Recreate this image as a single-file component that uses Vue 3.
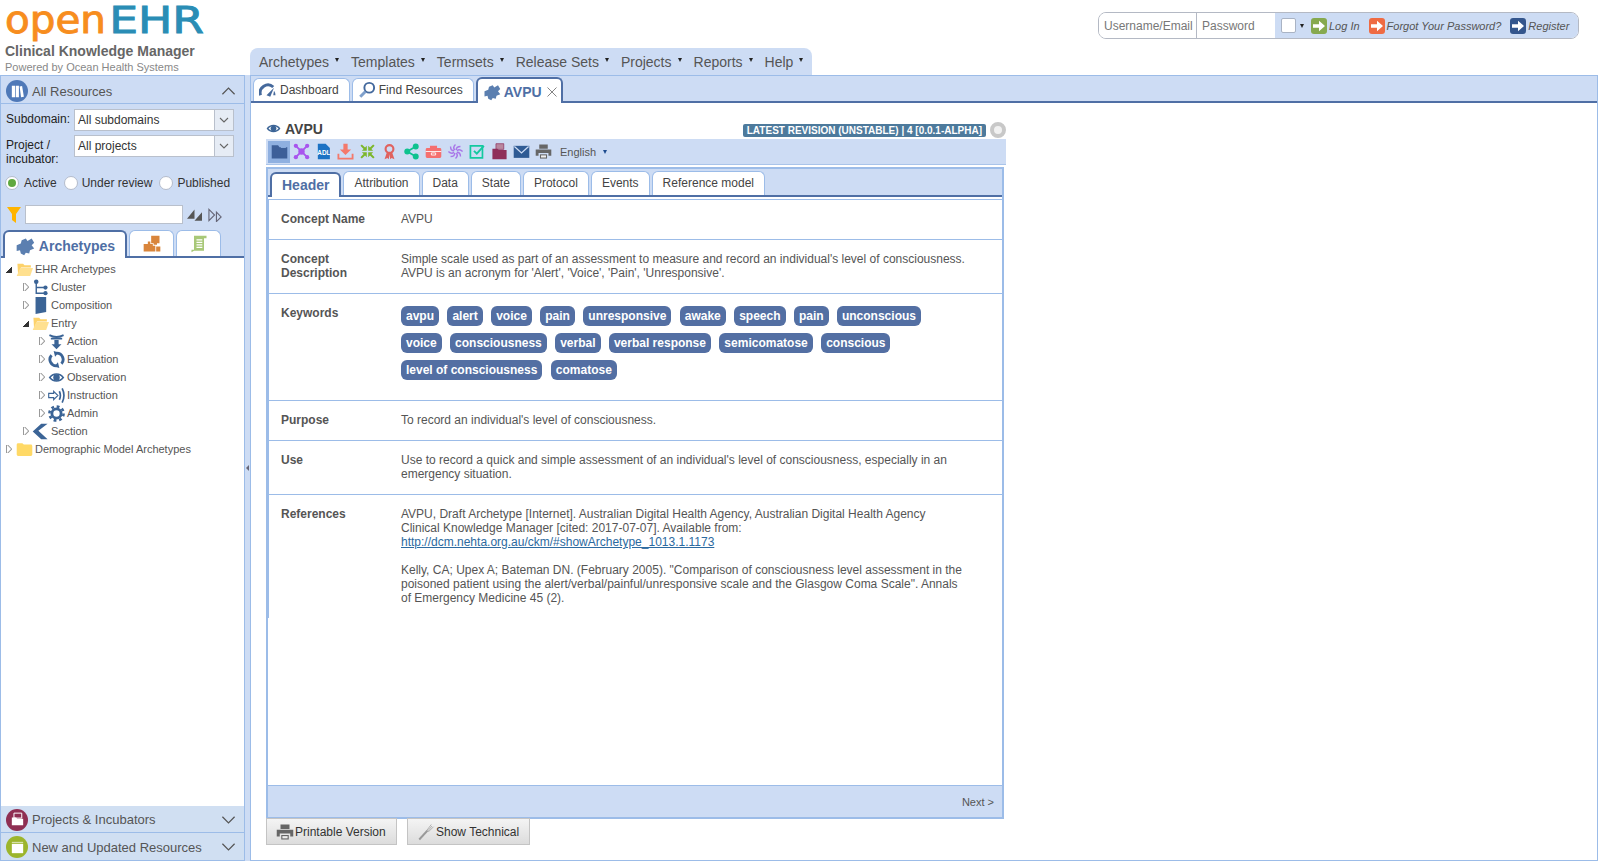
<template>
  <div class="page">
    <header class="topbar">
      <div class="brand">
        <div class="logo"><span class="logo-open">open</span><span class="logo-ehr">EHR</span></div>
        <div class="brand-title">Clinical Knowledge Manager</div>
        <div class="brand-sub">Powered by Ocean Health Systems</div>
      </div>
      <nav class="menu">
        <span v-for="item in menu" :key="item" class="menu-item">{{ item }}<i class="caret"></i></span>
      </nav>
      <div class="login">
        <span class="login-field user">Username/Email</span>
        <span class="login-field pass">Password</span>
        <div class="login-actions">
          <span class="check"></span><i class="caret small"></i>
          <span class="go green"><svg viewBox="0 0 24 24" v-html="icons.arrow"></svg></span><em class="log">Log In</em>
          <span class="go orange"><svg viewBox="0 0 24 24" v-html="icons.arrow"></svg></span><em class="forgot">Forgot Your Password?</em>
          <span class="go navy"><svg viewBox="0 0 24 24" v-html="icons.arrow"></svg></span><em>Register</em>
        </div>
      </div>
    </header>

    <div class="body">
      <aside class="side">
        <div class="acc-head first">
          <span class="acc-icon blue"><svg viewBox="0 0 24 24" v-html="icons.books"></svg></span>
          <span class="acc-title">All Resources</span>
          <svg class="chev" viewBox="0 0 16 10"><path d="M1.5 8.5 8 2l6.5 6.5" /></svg>
        </div>
        <div class="filters">
          <div class="filter-row">
            <label>Subdomain:</label>
            <div class="select"><span>All subdomains</span><b><svg viewBox="0 0 12 8"><path d="M2 2l4 4 4-4" /></svg></b></div>
          </div>
          <div class="filter-row two">
            <label>Project / incubator:</label>
            <div class="select"><span>All projects</span><b><svg viewBox="0 0 12 8"><path d="M2 2l4 4 4-4" /></svg></b></div>
          </div>
          <div class="radios">
            <span class="radio on"></span><span class="r-text first">Active</span>
            <span class="radio"></span><span class="r-text">Under review</span>
            <span class="radio"></span><span class="r-text">Published</span>
          </div>
          <div class="search">
            <svg class="funnel" viewBox="0 0 14 16"><path d="M0 0h14L9 7v9l-4-3V7z" /></svg>
            <span class="search-input"></span>
            <svg class="tri" viewBox="0 0 16 14"><path d="M0 11 8 1v10zM8 13h8V4z" fill="#555" /></svg>
            <svg class="tri second" viewBox="0 0 16 14"><path d="M1 1l6 6-6 6zM9 4l5 5-5 5z" fill="none" stroke="#667" stroke-width="1.2" /></svg>
          </div>
        </div>
        <div class="side-tabs">
          <span class="side-tab active"><svg viewBox="0 0 24 24" v-html="icons.puzzle"></svg>Archetypes</span>
          <span class="side-tab icon-only"><svg viewBox="0 0 24 24" v-html="icons.blocks"></svg></span>
          <span class="side-tab icon-only"><svg viewBox="0 0 24 24" v-html="icons.scroll"></svg></span>
        </div>
        <div class="tree">
          <div v-for="node in tree" :key="node.label" class="tree-row" :class="'lvl' + node.level">
            <i class="arrow" :class="{ open: node.open }"></i>
            <svg class="tree-icon" viewBox="0 0 24 24" v-html="icons[node.icon]"></svg>
            <span>{{ node.label }}</span>
          </div>
        </div>
        <div class="acc-head bottom">
          <span class="acc-icon maroon"><svg viewBox="0 0 24 24" v-html="icons.project"></svg></span>
          <span class="acc-title">Projects &amp; Incubators</span>
          <svg class="chev" viewBox="0 0 16 10"><path d="M1.5 1.5 8 8l6.5-6.5" /></svg>
        </div>
        <div class="acc-head bottom last">
          <span class="acc-icon lime"><svg viewBox="0 0 24 24" v-html="icons.calendar"></svg></span>
          <span class="acc-title">New and Updated Resources</span>
          <svg class="chev" viewBox="0 0 16 10"><path d="M1.5 1.5 8 8l6.5-6.5" /></svg>
        </div>
      </aside>

      <div class="splitter"><i></i></div>

      <main class="main">
        <div class="main-tabs">
          <span class="main-tab"><svg viewBox="0 0 24 24" v-html="icons.gauge"></svg>Dashboard</span>
          <span class="main-tab"><svg viewBox="0 0 24 24" v-html="icons.search"></svg>Find Resources</span>
          <span class="main-tab active"><svg viewBox="0 0 24 24" v-html="icons.puzzle"></svg>AVPU<svg class="close" viewBox="0 0 10 10"><path d="M0.5 0.5l9 9M9.5 0.5l-9 9" /></svg></span>
        </div>
        <div class="doc">
          <div class="doc-title">
            <svg viewBox="0 0 24 24" v-html="icons.eye"></svg>
            <h2>AVPU</h2>
            <span class="badge">LATEST REVISION (UNSTABLE) | 4 [0.0.1-ALPHA]</span>
            <span class="ring"></span>
          </div>
          <div class="toolbar">
            <span v-for="(tool, i) in tools" :key="i" class="tool" :class="{ active: i === 0 }">
              <svg viewBox="0 0 24 24" v-html="tool"></svg>
            </span>
            <span class="lang">English<i class="caret navy-caret"></i></span>
          </div>
          <section class="panel">
            <div class="panel-tabs">
              <span v-for="(t, i) in panelTabs" :key="t" class="panel-tab" :class="{ active: i === 0 }">{{ t }}</span>
            </div>
            <div class="panel-body">
              <div class="rows">
                <div class="row">
                  <div class="key">Concept Name</div>
                  <div class="val">AVPU</div>
                </div>
                <div class="row">
                  <div class="key">Concept Description</div>
                  <div class="val">Simple scale used as part of an assessment to measure and record an individual's level of consciousness. AVPU is an acronym for 'Alert', 'Voice', 'Pain', 'Unresponsive'.</div>
                </div>
                <div class="row keywords">
                  <div class="key">Keywords</div>
                  <div class="chips">
                    <span v-for="(k, i) in keywords" :key="i" class="chip">{{ k }}</span>
                  </div>
                </div>
                <div class="row">
                  <div class="key">Purpose</div>
                  <div class="val">To record an individual's level of consciousness.</div>
                </div>
                <div class="row">
                  <div class="key">Use</div>
                  <div class="val">Use to record a quick and simple assessment of an individual's level of consciousness, especially in an emergency situation.</div>
                </div>
                <div class="row last">
                  <div class="key">References</div>
                  <div class="val">
                    AVPU, Draft Archetype [Internet]. Australian Digital Health Agency, Australian Digital Health Agency Clinical Knowledge Manager [cited: 2017-07-07]. Available from:<br />
                    <a href="#">http://dcm.nehta.org.au/ckm/#showArchetype_1013.1.1173</a><br /><br />
                    Kelly, CA; Upex A; Bateman DN. (February 2005). "Comparison of consciousness level assessment in the poisoned patient using the alert/verbal/painful/unresponsive scale and the Glasgow Coma Scale". Annals of Emergency Medicine 45 (2).
                  </div>
                </div>
              </div>
            </div>
            <div class="panel-foot">Next &gt;</div>
          </section>
          <div class="actions">
            <button class="btn print"><svg viewBox="0 0 24 24" v-html="icons.printer"></svg>Printable Version</button>
            <button class="btn tech"><svg viewBox="0 0 24 24" v-html="icons.wrench"></svg>Show Technical</button>
          </div>
        </div>
      </main>
    </div>
  </div>
</template>

<script setup>
const menu = ['Archetypes', 'Templates', 'Termsets', 'Release Sets', 'Projects', 'Reports', 'Help']
const panelTabs = ['Header', 'Attribution', 'Data', 'State', 'Protocol', 'Events', 'Reference model']
const keywords = [
  'avpu', 'alert', 'voice', 'pain', 'unresponsive', 'awake', 'speech', 'pain', 'unconscious',
  'voice', 'consciousness', 'verbal', 'verbal response', 'semicomatose', 'conscious',
  'level of consciousness', 'comatose'
]

const NAVY = '#3b6496'
const corner = 'M11 11H4l2.5-2.500L2 4l2-2 4.500 4.500L11 4z'
const icons = {
  arrow: '<path d="M3 9.500h9V4l9 8-9 8v-5.500H3z" fill="#fff"/>',
  books: '<path d="M4 4h4.500v16H4zM9.500 4H14v16H9.500zM15 5l3.500-.8L21 19.500l-4 .5z" fill="#fff"/>',
  puzzle: '<path d="M2 11l5-2 1-4 5-2 2 3 5-3 3 5-3 3 3 4-5 2-1 4-4-1-2 3-4-2-1-4-4 1z" fill="#5b7fb0"/>',
  blocks: '<path d="M11 2h10v9h-3v2h-4v-2h-3zM2 12h5V9h3v3h3v2h3v7H2zM17 15h5v6h-5z" fill="#d9853b"/>',
  scroll: '<path d="M6 2h15v3h-3v15H6l-3 2v-3h3z" fill="#a8c878"/><path d="M9 7h7M9 10h7M9 13h7M9 16h7" stroke="#fff" stroke-width="1.400"/>',
  folderOpen: '<path d="M2 4h8l2 2h9v3H7L3 20z" fill="#fdd26a"/><path d="M6 10h18l-4 11H1z" fill="#ffe08f"/>',
  folder: '<path d="M1 5a2 2 0 0 1 2-2h6l2 2h10a2 2 0 0 1 2 2v12a2 2 0 0 1-2 2H3a2 2 0 0 1-2-2z" fill="#ffd966"/>',
  cluster: '<circle cx="6" cy="4" r="3.200" fill="' + NAVY + '"/><circle cx="19" cy="12" r="3" fill="' + NAVY + '"/><circle cx="19" cy="20" r="3" fill="' + NAVY + '"/><path d="M6 4v16h13M6 12h13" fill="none" stroke="' + NAVY + '" stroke-width="2"/>',
  composition: '<path d="M5 0h15v21l-15 3z" fill="' + NAVY + '"/>',
  action: '<path d="M2 3c6 3 14 3 20 0M4 8h16" fill="none" stroke="' + NAVY + '" stroke-width="2.400"/><path d="M9 10h6v6h4l-7 7-7-7h4z" fill="' + NAVY + '"/>',
  evaluation: '<path d="M12 3a9 9 0 0 1 7 15M12 21a9 9 0 0 1-7-15" fill="none" stroke="' + NAVY + '" stroke-width="4"/><path d="M8 0l7 2-5 6zM16 24l-7-2 5-6z" fill="' + NAVY + '"/>',
  eye: '<path d="M1 12c5-8 17-8 22 0-5 8-17 8-22 0z" fill="' + NAVY + '"/><path d="M4 12c4-5 12-5 16 0-4 5-12 5-16 0z" fill="#fff"/><circle cx="12" cy="12" r="4.600" fill="' + NAVY + '"/>',
  instruction: '<path d="M1 9h7V6l6 6-6 6v-3H1z" fill="none" stroke="' + NAVY + '" stroke-width="1.600"/><path d="M16 6c2 4 2 8 0 12M20 2c3 6 3 14 0 20" fill="none" stroke="' + NAVY + '" stroke-width="2.400"/>',
  gear: '<circle cx="12" cy="12" r="6.500" fill="none" stroke="' + NAVY + '" stroke-width="4"/><circle cx="12" cy="12" r="10" fill="none" stroke="' + NAVY + '" stroke-width="3.600" stroke-dasharray="4 3.850"/>',
  section: '<path d="M22 1L9 11l13 12H13L1 12 13 1z" fill="' + NAVY + '"/>',
  project: '<path d="M7 3h11v7H7z" fill="none" stroke="#fff" stroke-width="1.400"/><path d="M4 9h6l1.500 2H20v9H4z" fill="#fff"/>',
  calendar: '<path d="M4 7h16v13H4z" fill="#fff"/><path d="M4 4h16v2H4z" fill="#fff" opacity=".6"/>',
  gauge: '<path d="M2 19A10.500 10.500 0 0 1 19 8" fill="none" stroke="#45699c" stroke-width="4"/><path d="M10 19l10-10-5 12z" fill="#45699c"/><path d="M20 13a10 10 0 0 1 2 6h-3z" fill="#45699c"/>',
  search: '<circle cx="15" cy="9" r="6.500" fill="#fff" stroke="#44699d" stroke-width="2.600"/><path d="M10 14l-7 7" stroke="#7fa0cc" stroke-width="4"/>',
  printer: '<path d="M6 2h12v6H6zM1 9h22v9h-4v-4H5v4H1z" fill="#666"/><path d="M7 16h10v6H7z" fill="#666"/><path d="M8.500 17.500h7v3h-7z" fill="#eee"/>',
  wrench: '<path d="M3 22l11-12" stroke="#999" stroke-width="2.600"/><path d="M13 10l6-8M15 12l7-7M14 11l6-7" stroke="#aaa" stroke-width="1.200"/>'
}

const tools = [
  '<path d="M1 3h9l2 3h11v16H1z" fill="#3d5f98"/><path d="M14 5h7v2h-7z" fill="#8fb0e0"/>',
  '<path d="M4 4l16 16M20 4L4 20" stroke="#a855ee" stroke-width="2.600"/><circle cx="12" cy="12" r="4.500" fill="#a855ee"/><circle cx="4" cy="4" r="3" fill="#a855ee"/><circle cx="20" cy="4" r="3" fill="#a855ee"/><circle cx="4" cy="20" r="3" fill="#a855ee"/><circle cx="20" cy="20" r="3" fill="#a855ee"/>',
  '<path d="M4 1h11l6 6v16H4z" fill="#1c72c4"/><text x="12.500" y="17" font-size="9" font-weight="700" font-family="Liberation Sans, sans-serif" text-anchor="middle" fill="#fff">ADL</text>',
  '<path d="M9 1h6v8h5l-8 8-8-8h5z" fill="#f4796b"/><path d="M2 15v7h20v-7" fill="none" stroke="#f4796b" stroke-width="2.600"/>',
  [0, 90, 180, 270].map((a) => '<path d="' + corner + '" fill="#7cb62a" transform="rotate(' + a + ' 12 12)"/>').join(''),
  '<circle cx="12" cy="8.500" r="5.500" fill="none" stroke="#e0625f" stroke-width="3"/><path d="M8 14l-3 9 4-2 2 2 1-7 1 7 2-2 4 2-3-9z" fill="#e0625f"/>',
  '<path d="M18 5L6 12l12 7" fill="none" stroke="#0ec28f" stroke-width="2.400"/><circle cx="18" cy="5" r="4.200" fill="#0ec28f"/><circle cx="6" cy="12" r="4.200" fill="#0ec28f"/><circle cx="18" cy="19" r="4.200" fill="#0ec28f"/>',
  '<path d="M7 7V4h10v3h4a2 2 0 0 1 2 2v10a2 2 0 0 1-2 2H3a2 2 0 0 1-2-2V9a2 2 0 0 1 2-2z" fill="#f56f6f"/><path d="M1 12h22M9 14h6v3H9z" stroke="#fff" stroke-width="1.200" fill="none"/>',
  '<path d="M12 2c-3 3-3 6-1 8M22 12c-3-3-6-3-8-1M12 22c3-3 3-6 1-8M2 12c3 3 6 3 8 1M5 5c0 4 2 6 5 6M19 5c-4 0-6 2-6 5M19 19c0-4-2-6-5-6M5 19c4 0 6-2 6-5" fill="none" stroke="#a877e8" stroke-width="2"/>',
  '<path d="M2 4h17v17H2z" fill="none" stroke="#14c9a0" stroke-width="2.400"/><path d="M7 11l4 4 10-11" fill="none" stroke="#14c9a0" stroke-width="2.600"/>',
  '<path d="M7 1h11v8H7z" fill="#b9889f" stroke="#8f2f5a"/><path d="M2 8h7l2 2h11v13H2z" fill="#8f2f5a"/>',
  '<path d="M1 4h22v17H1z" fill="#2f5b94"/><path d="M2 5l10 9 10-9" fill="none" stroke="#cddcf4" stroke-width="1.800"/>',
  icons.printer
]

const tree = [
  { label: 'EHR Archetypes', level: 0, open: true, icon: 'folderOpen' },
  { label: 'Cluster', level: 1, icon: 'cluster' },
  { label: 'Composition', level: 1, icon: 'composition' },
  { label: 'Entry', level: 1, open: true, icon: 'folderOpen' },
  { label: 'Action', level: 2, icon: 'action' },
  { label: 'Evaluation', level: 2, icon: 'evaluation' },
  { label: 'Observation', level: 2, icon: 'eye' },
  { label: 'Instruction', level: 2, icon: 'instruction' },
  { label: 'Admin', level: 2, icon: 'gear' },
  { label: 'Section', level: 1, icon: 'section' },
  { label: 'Demographic Model Archetypes', level: 0, icon: 'folder' }
]
</script>

<style>
html, body { margin: 0; padding: 0; background: #fff; }
</style>

<style scoped>
.page {
  width: 1600px;
  height: 861px;
  display: flex;
  flex-direction: column;
  overflow: hidden;
  font-family: "Liberation Sans", Arial, sans-serif;
  font-size: 12px;
  color: #555;
  box-sizing: border-box;
}

/* top */
.topbar { height: 75px; display: flex; flex: none; }
.brand { width: 250px; flex: none; padding-left: 5px; box-sizing: border-box; }
.logo {
  height: 40px;
  font-family: "DejaVu Sans", sans-serif;
  font-size: 37px;
  line-height: 42px;
  transform: scaleX(1.17);
  transform-origin: left top;
  -webkit-text-stroke: 0.9px;
  white-space: nowrap;
}
.logo-open { display: inline-block; color: #f78d1e; transform: scaleX(0.935); transform-origin: left top; margin-right: -3.400px; }
.logo-ehr { display: inline-block; color: #2a8db5; transform: scaleX(1.055); transform-origin: left top; }
.brand-title { font-size: 14px; font-weight: 700; color: #666; line-height: 18px; margin-top: 2px; }
.brand-sub { font-size: 11px; color: #888; line-height: 13px; margin-top: 1px; }

.menu {
  align-self: flex-end;
  height: 27px;
  width: 562px;
  box-sizing: border-box;
  background: #cddcf4;
  border-radius: 8px 8px 0 0;
  display: flex;
  align-items: center;
  padding-left: 9px;
  gap: 12px;
  font-size: 14px;
  color: #555;
}
.menu-item { display: inline-flex; align-items: center; white-space: nowrap; }
.caret {
  display: inline-block;
  width: 0;
  height: 0;
  border-left: 2.500px solid transparent;
  border-right: 2.500px solid transparent;
  border-top: 4px solid #222;
  margin-left: 6px;
  margin-bottom: 4px;
}
.caret.small { margin: 0 0 0 4px; }
.navy-caret { border-top-color: #1d4b8f; margin-bottom: 0; margin-left: 7px; }

.login {
  margin-left: auto;
  margin-right: 21px;
  margin-top: 12px;
  height: 27px;
  width: 481px;
  box-sizing: border-box;
  display: flex;
  border: 1px solid #b4b9c4;
  border-radius: 8px;
  overflow: hidden;
}
.login-field { line-height: 27px; color: #777; padding-left: 5px; box-sizing: border-box; background: #fff; }
.login-field.user { width: 98px; border-right: 1px solid #b4b9c4; }
.login-field.pass { width: 78px; }
.login-actions {
  flex: 1;
  background: #cddcf4;
  display: flex;
  align-items: center;
  padding-left: 6px;
  font-size: 11px;
  color: #555;
}
.login-actions em { white-space: nowrap; }
.check { width: 13px; height: 13px; background: #fff; border: 1px solid #a9b3c4; border-radius: 2px; }
.go { width: 16px; height: 16px; border-radius: 3px; margin-left: 7px; margin-right: 2px; display: flex; flex: none; }
.go svg { width: 16px; height: 16px; }
.go.green { background: #86a94f; }
.go.orange { background: #ef6b43; margin-left: 9px; }
.go.navy { background: #34568d; margin-left: 9px; }

/* layout */
.body { flex: 1; display: flex; min-height: 0; }

/* side */
.side {
  width: 245px;
  flex: none;
  box-sizing: border-box;
  border: 1px solid #9cbce8;
  display: flex;
  flex-direction: column;
  background: #fff;
}
.acc-head {
  height: 27px;
  flex: none;
  box-sizing: border-box;
  display: flex;
  align-items: center;
  background: #d0dff2;
  padding-left: 5px;
  padding-top: 1px;
  font-size: 13px;
  color: #555;
}
.acc-head.first { height: 28px; padding-top: 3px; border-bottom: 1px solid #9cbce8; background: #cddcf4; }
.acc-head.bottom { border-bottom: 1px solid #9cbce8; }
.acc-head.last { border-bottom: 0; }
.acc-icon { width: 22px; height: 22px; border-radius: 50%; display: flex; align-items: center; justify-content: center; margin-right: 4px; flex: none; }
.acc-icon svg { width: 17px; height: 17px; }
.acc-icon.blue { background: #4f79b8; }
.acc-icon.maroon { background: #8f2f52; }
.acc-icon.lime { background: #9cb52c; }
.acc-title { flex: 1; }
.chev { width: 15px; height: 10px; margin-right: 8px; fill: none; stroke: #555; stroke-width: 1.300; }

.filters { background: #cddcf4; padding: 5px 5px 0; height: 126px; box-sizing: border-box; flex: none; }
.filter-row { display: flex; height: 22px; margin-bottom: 4px; color: #222; }
.filter-row label { width: 68px; flex: none; line-height: 14px; padding-top: 3px; }
.select {
  width: 160px;
  height: 22px;
  box-sizing: border-box;
  background: #fff;
  border: 1px solid #b9c0cc;
  display: flex;
  line-height: 20px;
  padding-left: 3px;
  color: #333;
}
.select span { flex: 1; }
.select b { width: 18px; background: #e6ecf5; border-left: 1px solid #b9c0cc; display: flex; align-items: center; justify-content: center; }
.select svg { width: 12px; height: 8px; fill: none; stroke: #666; stroke-width: 1.100; }
.radios { display: flex; align-items: center; height: 14px; margin-top: 19px; margin-left: -1px; color: #333; }
.radio { width: 12px; height: 12px; border-radius: 50%; background: #fff; border: 1px solid #b4bccb; flex: none; position: relative; }
.radio.on::after { content: ""; position: absolute; left: 2px; top: 2px; width: 8px; height: 8px; border-radius: 50%; background: #5fa83f; }
.r-text { margin: 0 7px 0 4px; white-space: nowrap; }
.r-text.first { margin-left: 5px; }
.search { display: flex; align-items: center; margin-top: 15px; }
.funnel { width: 14px; height: 16px; fill: #ffb400; margin: 0 4px 0 1px; flex: none; }
.search-input { width: 158px; height: 19px; box-sizing: border-box; background: #fff; border: 1px solid #b9c0cc; }
.tri { width: 15px; height: 14px; margin-left: 4px; }
.tri.second { margin-left: 6px; }

.side-tabs {
  display: flex;
  height: 26px;
  flex: none;
  background: #cddcf4;
  padding-left: 2px;
  gap: 2px;
  border-bottom: 2px solid #4f6fa5;
}
.side-tab {
  height: 26px;
  box-sizing: border-box;
  background: #fff;
  border: 1px solid #9cbce8;
  border-bottom: 0;
  border-radius: 6px 6px 0 0;
  display: flex;
  align-items: center;
  justify-content: center;
}
.side-tab svg { width: 20px; height: 20px; }
.side-tab.icon-only { width: 45px; }
.side-tab.active {
  width: 124px;
  height: 28px;
  border: 2px solid #4f6fa5;
  border-bottom: 0;
  color: #4f6fa5;
  font-weight: 700;
  font-size: 14px;
  padding-top: 2px;
  position: relative;
  z-index: 1;
}
.side-tab.active svg { margin-right: 4px; }

.tree { flex: 1; padding-top: 2px; font-size: 11px; color: #555; }
.tree-row { height: 18px; display: flex; align-items: center; white-space: nowrap; }
.tree-row.lvl0 { padding-left: 5px; }
.tree-row.lvl0 .tree-icon { margin-left: 4px; }
.tree-row.lvl1 { padding-left: 22px; }
.tree-row.lvl2 { padding-left: 38px; }
.tree-icon { width: 17px; height: 17px; margin: 0 2px 0 3px; flex: none; }
.arrow {
  width: 6px;
  height: 8px;
  flex: none;
  box-sizing: border-box;
  border-left: 1px solid #999;
  position: relative;
  overflow: hidden;
}
.arrow::after {
  content: "";
  position: absolute;
  left: -4px;
  top: 0;
  width: 5.600px;
  height: 5.600px;
  border: 1px solid #999;
  transform: rotate(45deg);
  transform-origin: center;
}
.arrow.open { border: 0; width: 6px; height: 7px; background: linear-gradient(135deg, transparent 50%, #333 50%); overflow: visible; }
.arrow.open::after { display: none; }

.splitter { width: 5px; flex: none; background: #cddcf4; display: flex; align-items: center; justify-content: center; }
.splitter i { width: 0; height: 0; border-top: 3px solid transparent; border-bottom: 3px solid transparent; border-right: 3px solid #667; }

/* main */
.main {
  flex: 1;
  margin-right: 2px;
  box-sizing: border-box;
  border: 1px solid #9cbce8;
  display: flex;
  flex-direction: column;
  min-width: 0;
  background: #fff;
}
.main-tabs {
  height: 27px;
  flex: none;
  box-sizing: border-box;
  background: #cddcf4;
  border-bottom: 2px solid #4f6fa5;
  display: flex;
  align-items: flex-end;
  padding-left: 2px;
  gap: 2px;
}
.main-tab {
  height: 23px;
  box-sizing: border-box;
  background: #fff;
  border: 1px solid #9cbce8;
  border-bottom: 0;
  border-radius: 6px 6px 0 0;
  display: flex;
  align-items: center;
  padding: 0 10px 0 5px;
  color: #444;
  white-space: nowrap;
}
.main-tab svg { width: 18px; height: 18px; margin-right: 3px; }
.main-tab.active {
  height: 26px;
  margin-bottom: -2px;
  border: 2px solid #4f6fa5;
  border-bottom: 0;
  font-size: 14px;
  font-weight: 700;
  color: #4f6fa5;
  padding: 1px 4px 0 5px;
}
.main-tab .close { width: 10px; height: 10px; margin: 0 0 0 5px; fill: none; stroke: #777; stroke-width: 0.900; }

.doc { flex: 1; padding-left: 15px; width: 755px; box-sizing: border-box; min-height: 0; display: flex; flex-direction: column; }
.doc-title { height: 36px; flex: none; display: flex; align-items: flex-end; padding-bottom: 2px; box-sizing: border-box; position: relative; }
.doc-title > svg { width: 15px; height: 15px; margin-left: 0; margin-right: 4px; margin-bottom: 1px; }
.doc-title h2 { margin: 0; font-size: 14px; line-height: 16px; color: #444; font-weight: 700; }
.badge {
  margin-left: auto;
  margin-right: 20px;
  background: #4d7a9c;
  color: #fff;
  font-size: 10px;
  font-weight: 700;
  line-height: 13px;
  height: 13px;
  padding: 0 4px;
  border-radius: 2px;
  white-space: nowrap;
}
.ring { position: absolute; right: 0; bottom: 1px; width: 8px; height: 8px; border: 4px solid #c8c8c8; border-radius: 50%; background: #f1f1f1; }

.toolbar {
  height: 26px;
  flex: none;
  background: #cddcf4;
  border-bottom: 1px solid #a9c4ea;
  box-sizing: border-box;
  display: flex;
  align-items: center;
  padding-left: 2px;
  width: 740px;
}
.tool { width: 22px; height: 22px; display: flex; align-items: center; justify-content: center; flex: none; }
.tool svg { width: 17px; height: 17px; }
.tool.active { background: #8fb0e0; }
.lang { font-size: 11px; color: #555; margin-left: 6px; display: flex; align-items: center; }

.panel {
  margin-top: 2px;
  width: 738px;
  height: 652px;
  flex: none;
  box-sizing: border-box;
  border: 2px solid #9cbce8;
  display: flex;
  flex-direction: column;
}
.panel-tabs {
  height: 28px;
  flex: none;
  box-sizing: border-box;
  background: #cddcf4;
  border-bottom: 2px solid #4f6fa5;
  display: flex;
  align-items: flex-end;
  padding-left: 2px;
  gap: 2px;
}
.panel-tab {
  height: 24px;
  box-sizing: border-box;
  background: #fff;
  border: 1px solid #9cbce8;
  border-bottom: 0;
  border-radius: 6px 6px 0 0;
  padding: 0 10px;
  line-height: 22px;
  color: #444;
  white-space: nowrap;
}
.panel-tab.active {
  height: 25px;
  margin-bottom: -2px;
  border: 2px solid #4f6fa5;
  border-bottom: 0;
  font-size: 14px;
  font-weight: 700;
  color: #4f6fa5;
  line-height: 23px;
}
.panel-body { flex: 1; min-height: 0; padding-top: 2px; }
.rows { border-top: 1px solid #9cbce8; border-left: 1px solid #9cbce8; }
.row {
  display: flex;
  padding: 12px 12px 13px 12px;
  border-bottom: 1px solid #9cbce8;
  line-height: 14px;
  color: #555;
}
.row.keywords { padding-bottom: 20px; }
.row.last { border-bottom: 0; }
.key { width: 120px; flex: none; font-weight: 700; box-sizing: border-box; padding-right: 20px; }
.val { width: 565px; }
.val a { color: #2c6aa0; }
.chips { display: flex; flex-wrap: wrap; gap: 7px 8.400px; width: 560px; }
.chip {
  background: #536fa3;
  color: #fff;
  font-weight: 700;
  height: 20px;
  line-height: 20px;
  padding: 0 5px;
  border-radius: 6px;
  white-space: nowrap;
}
.panel-foot {
  height: 32px;
  flex: none;
  box-sizing: border-box;
  background: #cddcf4;
  border-top: 1px solid #9cbce8;
  text-align: right;
  padding-right: 8px;
  line-height: 32px;
  font-size: 11px;
  color: #555;
}
.actions { display: flex; gap: 10px; margin-top: -1px; }
.btn {
  height: 27px;
  box-sizing: border-box;
  background: linear-gradient(#f4f4f4, #dcdcdc);
  border: 1px solid #c4c4c4;
  font: 12px "Liberation Sans", Arial, sans-serif;
  color: #333;
  display: flex;
  align-items: center;
  padding: 0;
}
.btn svg { width: 18px; height: 18px; margin-right: 1px; flex: none; }
.btn.print { width: 131px; padding-left: 9px; }
.btn.tech { width: 123px; padding-left: 9px; }
</style>
